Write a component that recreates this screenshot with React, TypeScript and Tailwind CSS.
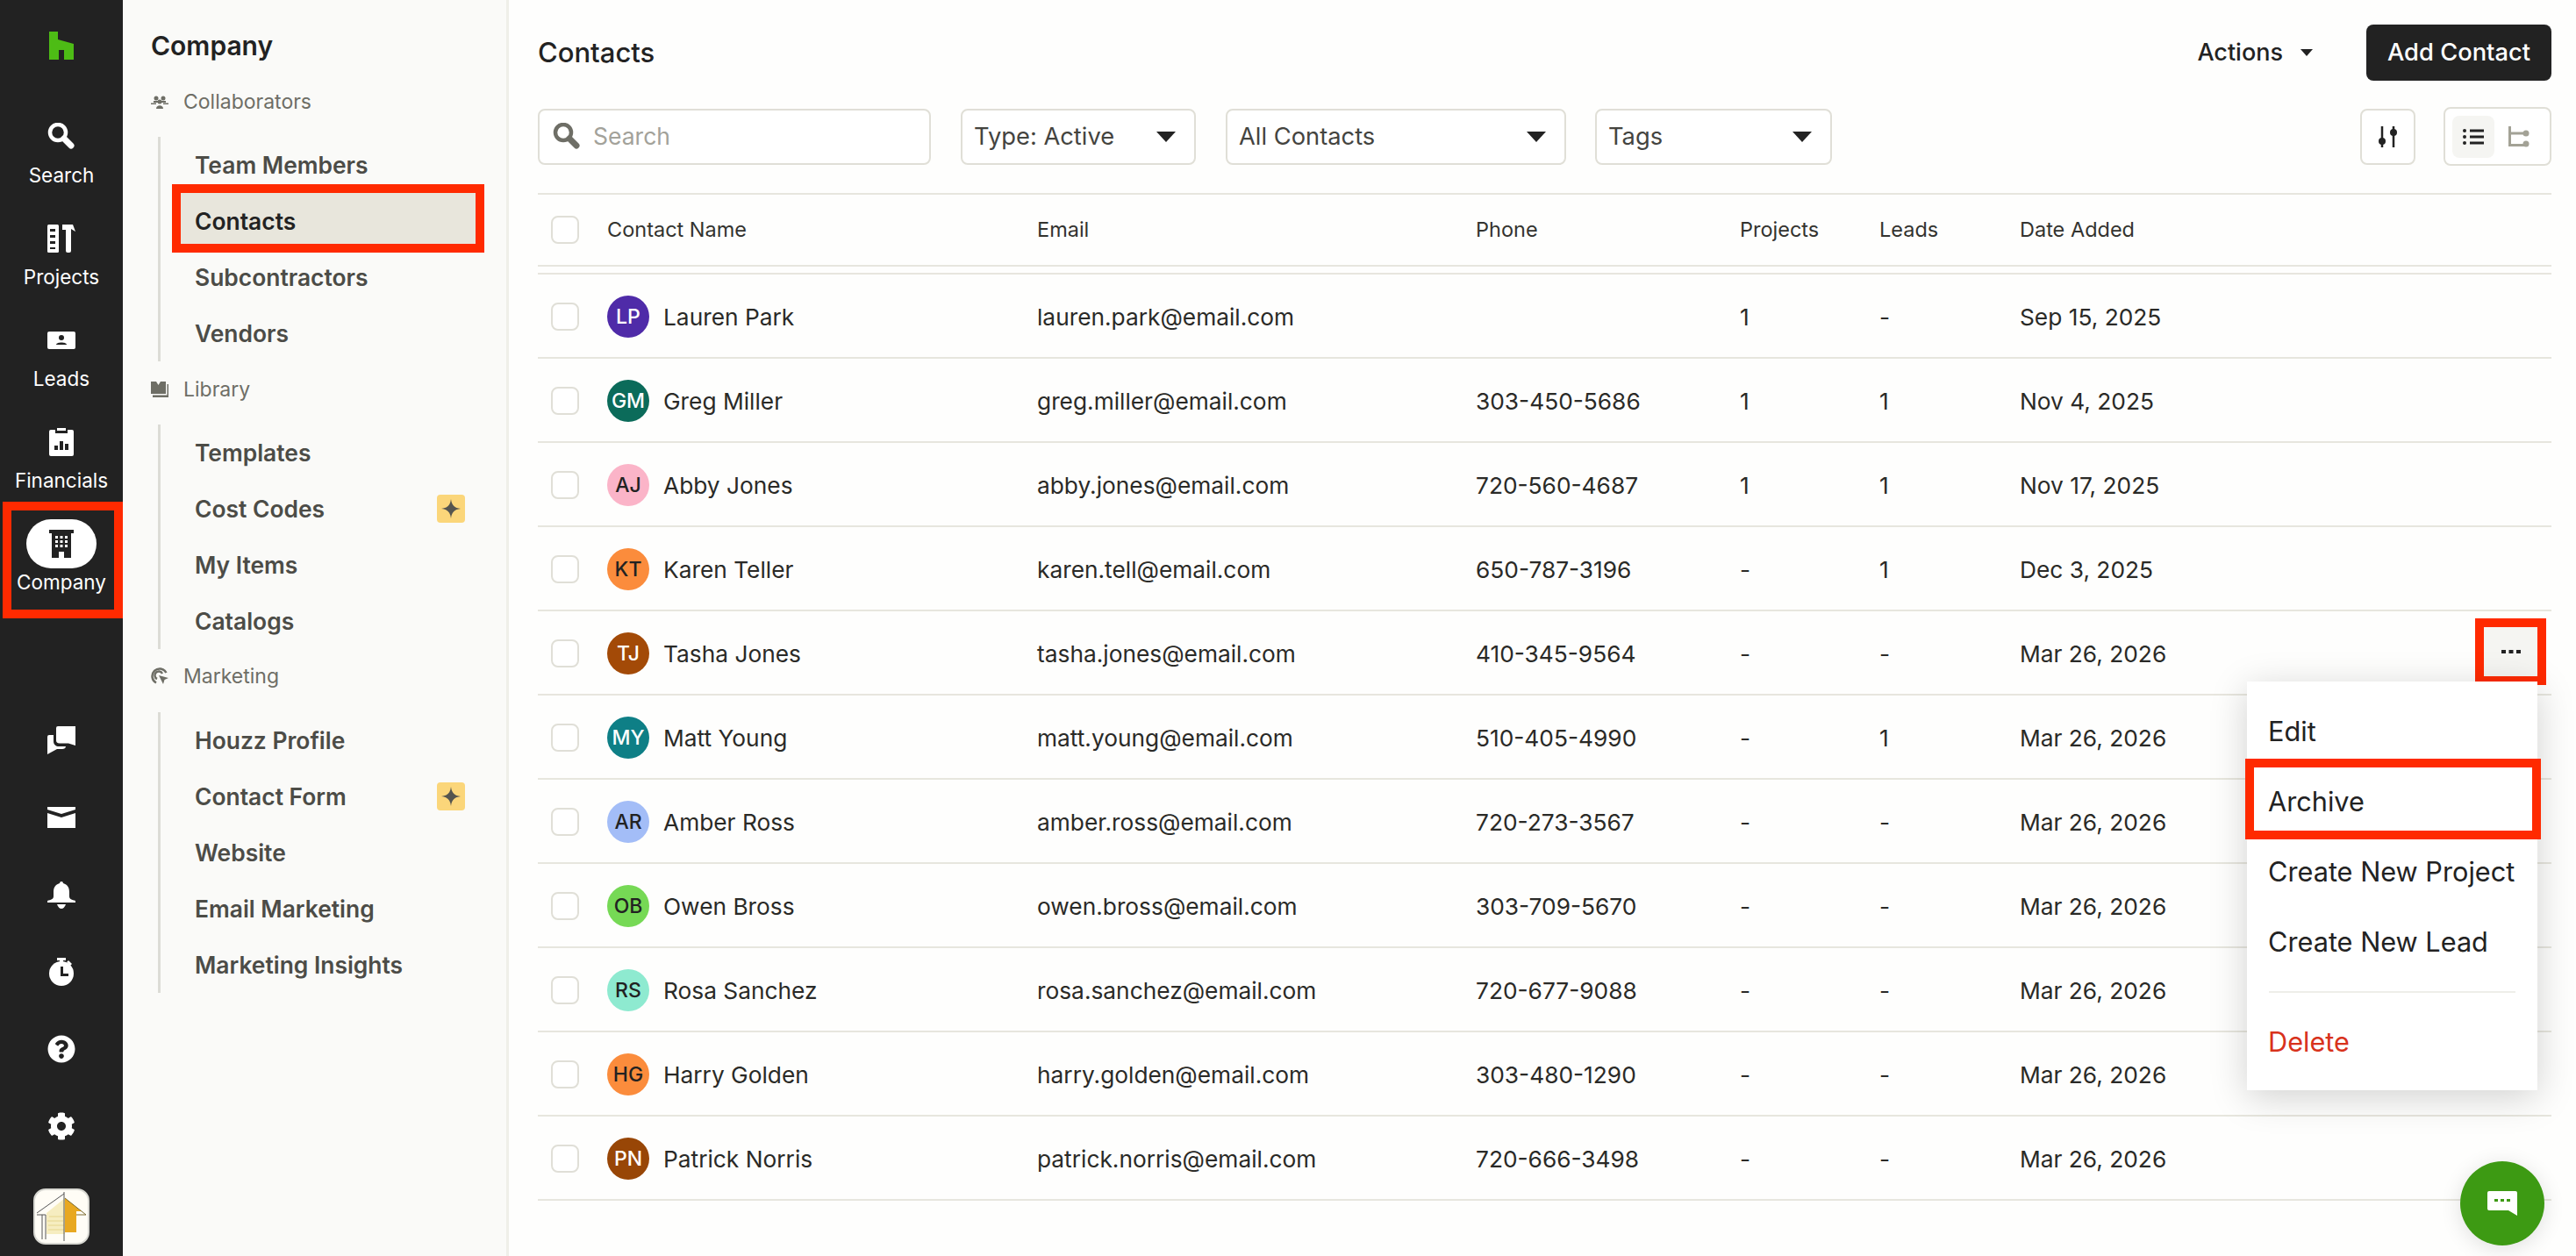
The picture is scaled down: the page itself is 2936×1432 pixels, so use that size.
import React from "react";
import { FaCog, FaQuestionCircle } from "react-icons/fa";

const RED = "border-[#ff2a00]";

function HouzzLogo() {
  return (
    <svg width="28" height="32" viewBox="0 0 28 32">
      <path d="M0 0H10V9L28 14V32H17V21H11V32H0Z" fill="#4dbc15" />
    </svg>
  );
}
function SearchIcon({ color = "#fff" }: { color?: string }) {
  return (
    <svg width="32" height="32" viewBox="0 0 32 32">
      <circle cx="12" cy="11" r="9" fill="none" stroke={color} strokeWidth="4.5" />
      <path d="M19 18L27 26" stroke={color} strokeWidth="7" strokeLinecap="round" />
    </svg>
  );
}
function ProjectsIcon() {
  return (
    <svg width="32" height="32" viewBox="0 0 32 32">
      <rect x="0" y="0" width="13" height="32" rx="1.5" fill="#fff" />
      <path d="M3 5H9V8H3ZM3 12H9V15H3ZM3 19H9V22H3ZM3 26H9V28H3Z" fill="#222" />
      <path d="M17 0H29L32 8L27 5V30A2 2 0 0 1 25 32H23A2 2 0 0 1 21 30V6H17Z" fill="#fff" />
    </svg>
  );
}
function LeadsIcon() {
  return (
    <svg width="32" height="20" viewBox="0 0 32 20">
      <rect width="32" height="20" rx="2" fill="#fff" />
      <circle cx="16" cy="7" r="3" fill="#222" />
      <path d="M10 15C10 11.5 22 11.5 22 15Z" fill="#222" />
    </svg>
  );
}
function FinancialsIcon() {
  return (
    <svg width="28" height="32" viewBox="0 0 28 32">
      <path d="M2 2H7V6H21V2H26A2 2 0 0 1 28 4V30A2 2 0 0 1 26 32H2A2 2 0 0 1 0 30V4A2 2 0 0 1 2 2Z" fill="#fff" />
      <rect x="9" y="0" width="10" height="3" fill="#fff" />
      <path d="M6 20H10V25H6ZM12 15H16V25H12ZM18 18H22V25H18Z" fill="#222" />
    </svg>
  );
}
function CompanyIcon() {
  return (
    <svg width="28" height="32" viewBox="0 0 28 32">
      <path d="M0 0H28V4H25V32H17V25H11V32H3V4H0Z" fill="#222" />
      <path d="M7 7H10V10H7ZM12.500 7H15.500V10H12.500ZM18 7H21V10H18ZM7 12H10V15H7ZM12.500 12H15.500V15H12.500ZM18 12H21V15H18ZM7 17H10V20H7ZM12.500 17H15.500V20H12.500ZM18 17H21V20H18Z" fill="#fff" />
    </svg>
  );
}
function MessagesIcon() {
  return (
    <svg width="32" height="32" viewBox="0 0 32 32">
      <path d="M10 2A2 2 0 0 1 12 0H32V22L24 19.500H14C11 19.500 10 18 10 16Z" fill="#fff" />
      <path d="M0 12A2 2 0 0 1 2 10H7V17C7 21 10 23 13 23H21C21 25 19 26 17 26H11L0 32Z" fill="#fff" />
    </svg>
  );
}
function MailIcon() {
  return (
    <svg width="32" height="24" viewBox="0 0 32 24">
      <path d="M0 0H32V3L16 8L0 3Z" fill="#fff" />
      <path d="M0 7L16 12L32 7V24H0Z" fill="#fff" />
    </svg>
  );
}
function BellIcon() {
  return (
    <svg width="32" height="32" viewBox="0 0 32 32">
      <path d="M14 3A2 2 0 0 1 18 3C23 4.500 25 8 25 13V18C25 21 28 22 32 23V25H0V23C4 22 7 21 7 18V13C7 8 9 4.500 14 3Z" fill="#fff" />
      <path d="M11 27H21C20 30 18 32 16 32C14 32 12 30 11 27Z" fill="#fff" />
    </svg>
  );
}
function TimerIcon() {
  return (
    <svg width="28" height="32" viewBox="0 0 28 32">
      <rect x="9" y="0" width="10" height="3" fill="#fff" />
      <rect x="12" y="2" width="4" height="4" fill="#fff" />
      <path d="M22 3L26 7L24 9L20 5Z" fill="#fff" />
      <circle cx="14" cy="18" r="14" fill="#fff" />
      <path d="M13 10H16V18H22V21H13Z" fill="#222" />
    </svg>
  );
}
function ListIcon() {
  return (
    <svg width="24" height="20" viewBox="0 0 24 20">
      <circle cx="2" cy="3" r="2" fill="#222" />
      <circle cx="2" cy="10" r="2" fill="#222" />
      <circle cx="2" cy="17" r="2" fill="#222" />
      <path d="M8 1.500H24V4.500H8ZM8 8.500H24V11.500H8ZM8 15.500H24V18.500H8Z" fill="#222" />
    </svg>
  );
}
function TreeIcon() {
  return (
    <svg width="24" height="24" viewBox="0 0 24 24">
      <path d="M1.500 0V21.500H18M1.500 8H18" fill="none" stroke="#a3a296" strokeWidth="3" />
      <circle cx="20" cy="8" r="3.500" fill="#a3a296" />
      <circle cx="20" cy="20" r="3.500" fill="#a3a296" />
    </svg>
  );
}
function SlidersIcon() {
  return (
    <svg width="22" height="24" viewBox="0 0 22 24">
      <path d="M4 0V24M17 0V24" stroke="#222" strokeWidth="2.500" />
      <circle cx="4" cy="17" r="4" fill="#222" />
      <circle cx="17" cy="7" r="4" fill="#222" />
    </svg>
  );
}
function StarBadge() {
  return (
    <span className="flex h-8 w-8 items-center justify-center rounded-[4px] bg-[#fbd67a]">
      <svg width="24" height="24" viewBox="0 0 24 24">
        <path d="M12 1C12.800 8 16 11.200 23 12C16 12.800 12.800 16 12 23C11.200 16 8 12.800 1 12C8 11.200 11.200 8 12 1Z" fill="#55554f" />
      </svg>
    </span>
  );
}
function CollabIcon() {
  return (
    <svg width="20" height="16" viewBox="0 0 20 16" fill="#6e6e66">
      <circle cx="6" cy="4" r="2.500" />
      <circle cx="14" cy="4" r="2.500" />
      <path d="M0 9.500H6V11H0ZM14 9.500H20V11H14Z" />
      <circle cx="10" cy="8" r="2.500" />
      <path d="M6 16C6 11 14 11 14 16Z" />
      <path d="M3 7H9V9H3ZM11 7H17V9H11Z" />
    </svg>
  );
}
function LibraryIcon() {
  return (
    <svg width="20" height="18" viewBox="0 0 20 18" fill="#6e6e66">
      <path d="M0 0H6L8.500 4L11 0H17V14H0Z" />
      <path d="M18.500 3H20V18H2V15.500H18.500Z" />
    </svg>
  );
}
function MarketingIcon() {
  return (
    <svg width="20" height="20" viewBox="0 0 20 20" fill="none">
      <path d="M17.500 6A8.500 8.500 0 1 0 6 17.500" stroke="#6e6e66" strokeWidth="2.500" />
      <path d="M13 7A4.500 4.500 0 1 0 7 13" stroke="#6e6e66" strokeWidth="2.500" />
      <path d="M9 9L20 12L15.500 14L14 19Z" fill="#6e6e66" />
    </svg>
  );
}
function AppLogo() {
  return (
    <span className="block h-[64px] w-[64px] overflow-hidden rounded-[14px] border-2 border-[#d8d8d2] bg-[#fffdf6]">
      <svg width="60" height="60" viewBox="0 0 60 60">
        <path d="M13 26L34 9V50H13Z" fill="#f6edc0" />
        <path d="M16 30H32M14 35H32M15 40H33M15 45H33" stroke="#e6d68d" strokeWidth="1" />
        <path d="M34 9L53 24H47V48H34Z" fill="#e8a820" />
        <path d="M34 9L58 28H47" fill="none" stroke="#7a6a30" strokeWidth="1" />
        <path d="M2 26L33 4M2 28H12V56M8 28V56M33 2V58" fill="none" stroke="#555" strokeWidth="1" />
      </svg>
    </span>
  );
}

function RailItem({ label, icon, active }: { label: string; icon: React.ReactNode; active?: boolean }) {
  return (
    <div className="flex h-[116px] flex-col items-center pt-[20px]">
      <div className={`flex h-[56px] w-[80px] items-center justify-center rounded-full ${active ? "bg-white" : ""}`}>{icon}</div>
      <div className="h-[30px] pt-[1px] text-[22.5px] leading-[30px] text-white">{label}</div>
    </div>
  );
}
function Rail() {
  const bottom = [<MessagesIcon key="m" />, <MailIcon key="e" />, <BellIcon key="b" />, <TimerIcon key="t" />, <FaQuestionCircle key="q" size={32} color="#fff" />, <FaCog key="c" size={32} color="#fff" />];
  return (
    <div className="flex h-full w-[140px] shrink-0 flex-col items-center bg-[#222222]">
      <div className="flex h-[108px] w-full items-start justify-center pt-[36px]">
        <HouzzLogo />
      </div>
      <RailItem label="Search" icon={<SearchIcon />} />
      <RailItem label="Projects" icon={<ProjectsIcon />} />
      <RailItem label="Leads" icon={<LeadsIcon />} />
      <RailItem label="Financials" icon={<FinancialsIcon />} />
      <RailItem label="Company" icon={<CompanyIcon />} active />
      <div className="mt-[112px] flex flex-col items-center">
        {bottom.map((b, i) => (
          <div key={i} className="flex h-[88px] items-center justify-center">
            {b}
          </div>
        ))}
      </div>
      <div className="mt-[27px]">
        <AppLogo />
      </div>
    </div>
  );
}

function SideItem({ label, star, active }: { label: string; star?: boolean; active?: boolean }) {
  return (
    <div className={`relative flex h-[64px] w-[336px] items-center justify-between pl-4 pr-3 text-[26.4px] font-semibold ${active ? "text-[#222]" : "text-[#4c4c47]"}`}>
      {active && <div className="absolute left-0 right-0 top-0 h-[58px] bg-[#e8e6dc]" />}
      <span className="relative pt-[2px]">{label}</span>
      {star && <StarBadge />}
      {active && <div className={`absolute -left-[10px] -right-[10px] -top-[10px] h-[78px] border-[10px] ${RED}`} />}
    </div>
  );
}
function SideGroup({ icon, title, items, mtClass, listClass }: { icon: React.ReactNode; title: string; items: { label: string; star?: boolean; active?: boolean }[]; mtClass: string; listClass: string }) {
  return (
    <div className={mtClass}>
      <div className="flex h-[32px] items-center">
        <span className="flex w-[37px] items-center">{icon}</span>
        <span className="text-[23px] text-[#6e6e66]">{title}</span>
      </div>
      <div className={`ml-[8px] border-l-[3px] border-[#dcdcd6] pl-[23px] ${listClass}`}>
        {items.map((it) => (
          <SideItem key={it.label} {...it} />
        ))}
      </div>
    </div>
  );
}
function Sidebar() {
  return (
    <div className="h-full w-[440px] shrink-0 border-r-[3px] border-[#efefe9] bg-[#fafaf8] pl-[32px] pt-[34px]">
      <div className="h-[36px] text-[30px] font-semibold leading-[36px] text-[#222]">Company</div>
      <SideGroup icon={<CollabIcon />} title="Collaborators" mtClass="mt-[30px]" listClass="mt-[24px]" items={[{ label: "Team Members" }, { label: "Contacts", active: true }, { label: "Subcontractors" }, { label: "Vendors" }]} />
      <SideGroup icon={<LibraryIcon />} title="Library" mtClass="mt-[16px]" listClass="mt-[24px]" items={[{ label: "Templates" }, { label: "Cost Codes", star: true }, { label: "My Items" }, { label: "Catalogs" }]} />
      <SideGroup icon={<MarketingIcon />} title="Marketing" mtClass="mt-[15px]" listClass="mt-[25px]" items={[{ label: "Houzz Profile" }, { label: "Contact Form", star: true }, { label: "Website" }, { label: "Email Marketing" }, { label: "Marketing Insights" }]} />
    </div>
  );
}

function Caret({ className = "" }: { className?: string }) {
  return (
    <svg width="22" height="12" viewBox="0 0 22 12" className={className}>
      <path d="M0 0H22L11 12Z" fill="#222" />
    </svg>
  );
}
function SelectBox({ label, widthClass }: { label: string; widthClass: string }) {
  return (
    <div className={`flex h-[64px] items-center justify-between rounded-[8px] border-2 border-[#e0dfd7] bg-white pl-[13px] pr-[21px] text-[27.3px] text-[#44443f] ${widthClass}`}>
      <span className="pt-[1px]">{label}</span>
      <Caret />
    </div>
  );
}

const GRID = "grid grid-cols-[79px_490px_500px_301px_159px_160px_1fr] items-center";

type Row = { initials: string; name: string; email: string; phone: string; projects: string; leads: string; date: string; bg: string; fg: string };
const rows: Row[] = [
  { initials: "LP", name: "Lauren Park", email: "lauren.park@email.com", phone: "", projects: "1", leads: "-", date: "Sep 15, 2025", bg: "bg-[#4f2ba8]", fg: "text-white" },
  { initials: "GM", name: "Greg Miller", email: "greg.miller@email.com", phone: "303-450-5686", projects: "1", leads: "1", date: "Nov 4, 2025", bg: "bg-[#0b6b5a]", fg: "text-white" },
  { initials: "AJ", name: "Abby Jones", email: "abby.jones@email.com", phone: "720-560-4687", projects: "1", leads: "1", date: "Nov 17, 2025", bg: "bg-[#fbb4c8]", fg: "text-[#222]" },
  { initials: "KT", name: "Karen Teller", email: "karen.tell@email.com", phone: "650-787-3196", projects: "-", leads: "1", date: "Dec 3, 2025", bg: "bg-[#fb8c3c]", fg: "text-[#222]" },
  { initials: "TJ", name: "Tasha Jones", email: "tasha.jones@email.com", phone: "410-345-9564", projects: "-", leads: "-", date: "Mar 26, 2026", bg: "bg-[#a34a07]", fg: "text-white" },
  { initials: "MY", name: "Matt Young", email: "matt.young@email.com", phone: "510-405-4990", projects: "-", leads: "1", date: "Mar 26, 2026", bg: "bg-[#0e7f86]", fg: "text-white" },
  { initials: "AR", name: "Amber Ross", email: "amber.ross@email.com", phone: "720-273-3567", projects: "-", leads: "-", date: "Mar 26, 2026", bg: "bg-[#a3bdf7]", fg: "text-[#222]" },
  { initials: "OB", name: "Owen Bross", email: "owen.bross@email.com", phone: "303-709-5670", projects: "-", leads: "-", date: "Mar 26, 2026", bg: "bg-[#76d955]", fg: "text-[#222]" },
  { initials: "RS", name: "Rosa Sanchez", email: "rosa.sanchez@email.com", phone: "720-677-9088", projects: "-", leads: "-", date: "Mar 26, 2026", bg: "bg-[#8eead0]", fg: "text-[#222]" },
  { initials: "HG", name: "Harry Golden", email: "harry.golden@email.com", phone: "303-480-1290", projects: "-", leads: "-", date: "Mar 26, 2026", bg: "bg-[#fb8c3c]", fg: "text-[#222]" },
  { initials: "PN", name: "Patrick Norris", email: "patrick.norris@email.com", phone: "720-666-3498", projects: "-", leads: "-", date: "Mar 26, 2026", bg: "bg-[#984606]", fg: "text-white" },
];

function Check() {
  return <span className="block h-[32px] w-[32px] rounded-[8px] border-2 border-[#e0dfd7] bg-white" />;
}

function Table() {
  return (
    <div className="mt-[31px]">
      <div className={`${GRID} h-[84px] border-y-2 border-[#e7e6de] text-[23.5px] text-[#33332f]`}>
        <div className="pl-[15px]">
          <Check />
        </div>
        <div>Contact Name</div>
        <div>Email</div>
        <div>Phone</div>
        <div>Projects</div>
        <div>Leads</div>
        <div>Date Added</div>
      </div>
      <div className="mt-[7px] border-t-2 border-[#e7e6de]">
        {rows.map((r) => (
          <div key={r.name} className={`${GRID} h-[96px] border-b-2 border-[#e7e6de] pt-[2px] text-[26.3px] text-[#2a2a27]`}>
            <div className="pl-[15px]">
              <Check />
            </div>
            <div className="flex items-center gap-[16px]">
              <span className={`flex h-[48px] w-[48px] items-center justify-center rounded-full text-[23px] font-medium ${r.bg} ${r.fg}`}>{r.initials}</span>
              <span className="pt-[2px]">{r.name}</span>
            </div>
            <div className="pt-[2px]">{r.email}</div>
            <div className="pt-[2px]">{r.phone}</div>
            <div className="pt-[2px]">{r.projects}</div>
            <div className="pt-[2px]">{r.leads}</div>
            <div className="pt-[2px]">{r.date}</div>
          </div>
        ))}
      </div>
    </div>
  );
}

function Main() {
  return (
    <div className="h-full flex-1 bg-[#fefefd] pl-[33px] pr-[28px] pt-[28px]">
      <div className="flex h-[64px] items-center justify-between">
        <div className="text-[31px] font-medium text-[#222]">Contacts</div>
        <div className="flex items-center">
          <span className="text-[27px] font-medium text-[#222]">Actions</span>
          <svg width="14" height="8" viewBox="0 0 14 8" className="ml-[20px]">
            <path d="M0 0H14L7 8Z" fill="#222" />
          </svg>
          <button className="ml-[61px] h-[64px] w-[211px] rounded-[8px] bg-[#222] text-[27.3px] font-medium text-white">Add Contact</button>
        </div>
      </div>
      <div className="mt-[30px] flex h-[67px] items-center">
        <div className="flex h-[64px] w-[448px] items-center rounded-[8px] border-2 border-[#e0dfd7] bg-white pl-[15px] text-[26.5px] text-[#a3a29a]">
          <SearchIcon color="#6e6e66" />
          <span className="ml-[14px] pt-[1px]">Search</span>
        </div>
        <div className="ml-[34px]">
          <SelectBox label="Type: Active" widthClass="w-[268px]" />
        </div>
        <div className="ml-[34px]">
          <SelectBox label="All Contacts" widthClass="w-[388px]" />
        </div>
        <div className="ml-[33px]">
          <SelectBox label="Tags" widthClass="w-[270px]" />
        </div>
        <div className="ml-auto flex h-[64px] w-[63px] items-center justify-center rounded-[8px] border-2 border-[#e0dfd7] bg-white">
          <SlidersIcon />
        </div>
        <div className="ml-[32px] flex h-[67px] w-[123px] items-center rounded-[8px] border-2 border-[#e0dfd7] bg-white pl-[8px]">
          <span className="flex h-[48px] w-[48px] items-center justify-center rounded-[8px] bg-[#f5f5f2]">
            <ListIcon />
          </span>
          <span className="ml-[8px] flex h-[48px] w-[40px] items-center justify-center">
            <TreeIcon />
          </span>
        </div>
      </div>
      <Table />
    </div>
  );
}

function Overlays() {
  const items = ["Edit", "Archive", "Create New Project", "Create New Lead"];
  return (
    <>
      <div className={`absolute left-[2821px] top-[705px] flex h-[76px] w-[81px] items-center justify-center border-[10px] ${RED} bg-[#f5f5f2]`}>
        <svg width="22" height="6" viewBox="0 0 22 6">
          <rect x="0" y="1" width="5" height="4" fill="#222" />
          <rect x="8.500" y="1" width="5" height="4" fill="#222" />
          <rect x="17" y="1" width="5" height="4" fill="#222" />
        </svg>
      </div>
      <div className="absolute left-[2561px] top-[777px] h-[466px] w-[331px] bg-white pt-[17px] text-[30.7px] text-[#222] shadow-[0_8px_40px_rgba(0,0,0,0.18)]">
        {items.map((t) => (
          <div key={t} className="flex h-[80px] items-center pl-[24px]">
            {t}
          </div>
        ))}
        <div className="mx-[25px] mt-[16px] border-t-2 border-[#eeeee9]" />
        <div className="mt-[16px] flex h-[80px] items-center pl-[24px] text-[#d8321c]">Delete</div>
      </div>
      <div className={`absolute left-[2559px] top-[865px] h-[92px] w-[337px] border-[10px] ${RED}`} />
      <div className="absolute left-[2804px] top-[1324px] flex h-[96px] w-[96px] items-center justify-center rounded-full bg-[#3d9a13] shadow-[0_4px_24px_rgba(0,0,0,0.12)]">
        <svg width="34" height="28" viewBox="0 0 34 28">
          <path d="M2 0H32A2 2 0 0 1 34 2V28L24 22H2A2 2 0 0 1 0 20V2A2 2 0 0 1 2 0Z" fill="#fff" />
          <rect x="8" y="9" width="4" height="3" fill="#3d9a13" />
          <rect x="15" y="9" width="4" height="3" fill="#3d9a13" />
          <rect x="22" y="9" width="4" height="3" fill="#3d9a13" />
        </svg>
      </div>
      <div className={`absolute left-[3px] top-[572px] h-[133px] w-[137px] border-[10px] ${RED}`} />
    </>
  );
}

export default function App() {
  return (
    <div className="relative flex h-[1432px] w-[2936px] overflow-hidden font-['Inter',sans-serif]">
      <Rail />
      <Sidebar />
      <Main />
      <Overlays />
    </div>
  );
}
